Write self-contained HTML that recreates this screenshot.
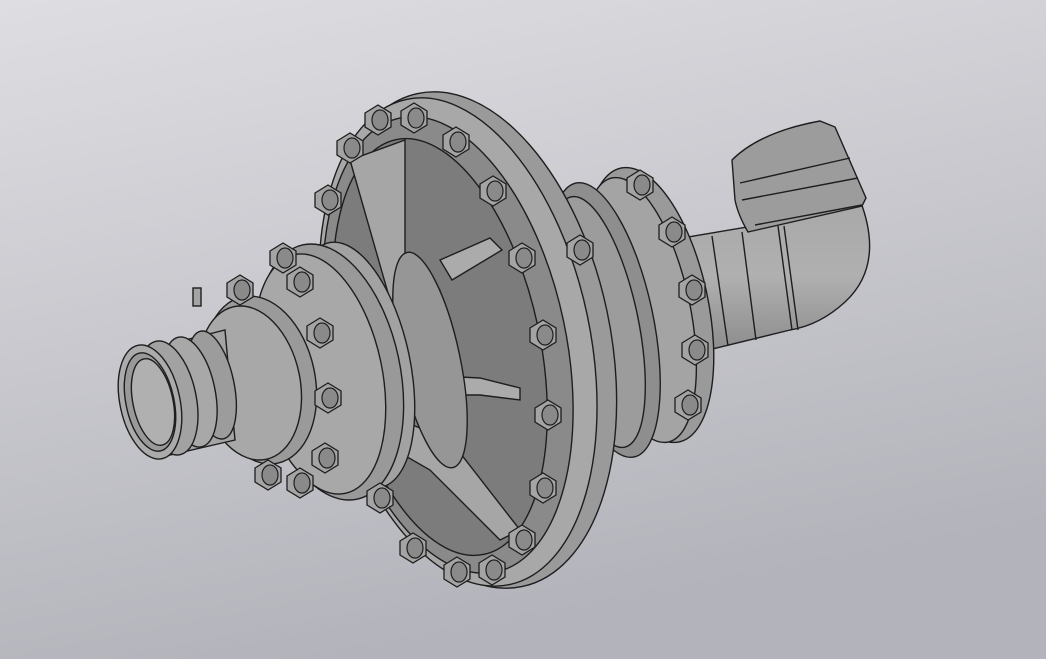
<!DOCTYPE html>
<html><head><meta charset="utf-8"><style>
html,body{margin:0;padding:0;width:1046px;height:659px;overflow:hidden}
</style></head><body>
<svg width="1046" height="659" viewBox="0 0 1046 659" xmlns="http://www.w3.org/2000/svg">
<defs>
<linearGradient id="bg" x1="0" y1="0" x2="0.3" y2="1">
<stop offset="0" stop-color="#dedee2"/><stop offset="1" stop-color="#b3b3bb"/></linearGradient>
<linearGradient id="pipe" x1="0" y1="0" x2="0" y2="1">
<stop offset="0" stop-color="#a8a8a8"/><stop offset="0.5" stop-color="#b0b0b0"/><stop offset="1" stop-color="#8c8c8c"/></linearGradient>
<g id="bolt"><polygon points="-13,-7 0,-15 13,-7 13,7 0,15 -13,7" fill="#a4a4a4" stroke="#1e1e1e" stroke-width="1.3"/><ellipse cx="2" cy="0" rx="8" ry="10" fill="#8a8a8a" stroke="#1e1e1e" stroke-width="1.2"/></g>
</defs>
<rect width="1046" height="659" fill="url(#bg)"/>
<g stroke="#1e1e1e" stroke-width="1.4">
<!-- elbow pipe -->
<path d="M745,228 L860,200 Q885,265 845,302 Q820,325 790,330 L700,352 L670,240 L765,224 Z" fill="url(#pipe)"/>
<path d="M732,160 Q760,132 820,121 L835,127 L866,198 L862,206 L748,232 Q738,215 735,200 Z" fill="#9c9c9c"/>
<path d="M740,183 L850,158 M742,200 L858,178 M755,225 L862,205" fill="none"/>
<path d="M712,236 L728,346 M742,232 L756,340 M778,226 L792,330 M784,226 L798,330" fill="none"/>
<!-- right flange -->
<ellipse cx="650" cy="305" rx="58" ry="140" transform="rotate(-12 650 305)" fill="#9a9a9a"/>
<ellipse cx="640" cy="310" rx="50" ry="135" transform="rotate(-12 640 310)" fill="#a4a4a4"/>
<ellipse cx="605" cy="320" rx="48" ry="140" transform="rotate(-12 605 320)" fill="#8e8e8e"/>
<ellipse cx="598" cy="322" rx="40" ry="128" transform="rotate(-12 598 322)" fill="#9c9c9c"/>
<!-- big flange -->
<ellipse cx="470" cy="340" rx="140" ry="252" transform="rotate(-12 470 340)" fill="#9a9a9a"/>
<ellipse cx="458" cy="342" rx="132" ry="248" transform="rotate(-12 458 342)" fill="#a8a8a8"/>
<ellipse cx="448" cy="345" rx="118" ry="232" transform="rotate(-12 448 345)" fill="#8a8a8a"/>
<ellipse cx="440" cy="347" rx="100" ry="212" transform="rotate(-12 440 347)" fill="#7c7c7c"/>
<!-- spokes -->
<path d="M350,160 L405,140 L405,270 L440,290 L430,310 L390,300 Z" fill="#a6a6a6"/>
<path d="M420,375 L480,378 L520,388 L520,400 L480,395 L430,395 Z" fill="#ababab"/>
<path d="M400,420 L450,440 L520,530 L500,540 L430,470 L395,450 Z" fill="#a6a6a6"/>
<path d="M440,260 L490,238 L502,250 L452,280 Z" fill="#ababab"/>
<ellipse cx="430" cy="360" rx="30" ry="110" transform="rotate(-12 430 360)" fill="#969696"/>
<!-- left flange -->
<ellipse cx="355" cy="365" rx="55" ry="125" transform="rotate(-12 355 365)" fill="#a2a2a2"/>
<ellipse cx="330" cy="372" rx="70" ry="130" transform="rotate(-12 330 372)" fill="#999"/>
<ellipse cx="320" cy="374" rx="62" ry="122" transform="rotate(-12 320 374)" fill="#a8a8a8"/>
<ellipse cx="260" cy="380" rx="55" ry="85" transform="rotate(-12 260 380)" fill="#9a9a9a"/>
<ellipse cx="250" cy="383" rx="50" ry="78" transform="rotate(-12 250 383)" fill="#a8a8a8"/>
<!-- nozzle -->
<path d="M165,345 L225,330 L235,440 L170,455 Z" fill="#a4a4a4"/>
<ellipse cx="212" cy="385" rx="22" ry="55" transform="rotate(-12 212 385)" fill="#9c9c9c"/>
<ellipse cx="190" cy="392" rx="25" ry="56" transform="rotate(-12 190 392)" fill="#a8a8a8"/>
<ellipse cx="168" cy="398" rx="28" ry="58" transform="rotate(-12 168 398)" fill="#a2a2a2"/>
<ellipse cx="150" cy="402" rx="30" ry="58" transform="rotate(-12 150 402)" fill="#ababab"/>
<ellipse cx="150" cy="402" rx="24" ry="50" transform="rotate(-12 150 402)" fill="#999"/>
<ellipse cx="153" cy="402" rx="20" ry="44" transform="rotate(-12 153 402)" fill="#b0b0b0"/>
<rect x="193" y="288" width="8" height="18" fill="#a4a4a4"/>
</g>
<use href="#bolt" x="378" y="120"/><use href="#bolt" x="414" y="118"/><use href="#bolt" x="456" y="142"/>
<use href="#bolt" x="493" y="191"/><use href="#bolt" x="522" y="258"/><use href="#bolt" x="543" y="335"/>
<use href="#bolt" x="548" y="415"/><use href="#bolt" x="543" y="488"/><use href="#bolt" x="522" y="540"/>
<use href="#bolt" x="492" y="570"/><use href="#bolt" x="457" y="572"/><use href="#bolt" x="413" y="548"/>
<use href="#bolt" x="380" y="498"/><use href="#bolt" x="328" y="200"/><use href="#bolt" x="350" y="148"/>
<use href="#bolt" x="640" y="185"/><use href="#bolt" x="672" y="232"/><use href="#bolt" x="692" y="290"/>
<use href="#bolt" x="695" y="350"/><use href="#bolt" x="688" y="405"/><use href="#bolt" x="580" y="250"/>
<use href="#bolt" x="283" y="258"/><use href="#bolt" x="300" y="282"/><use href="#bolt" x="240" y="290"/>
<use href="#bolt" x="320" y="333"/><use href="#bolt" x="328" y="398"/><use href="#bolt" x="325" y="458"/>
<use href="#bolt" x="300" y="483"/><use href="#bolt" x="268" y="475"/>
</svg>
</body></html>
